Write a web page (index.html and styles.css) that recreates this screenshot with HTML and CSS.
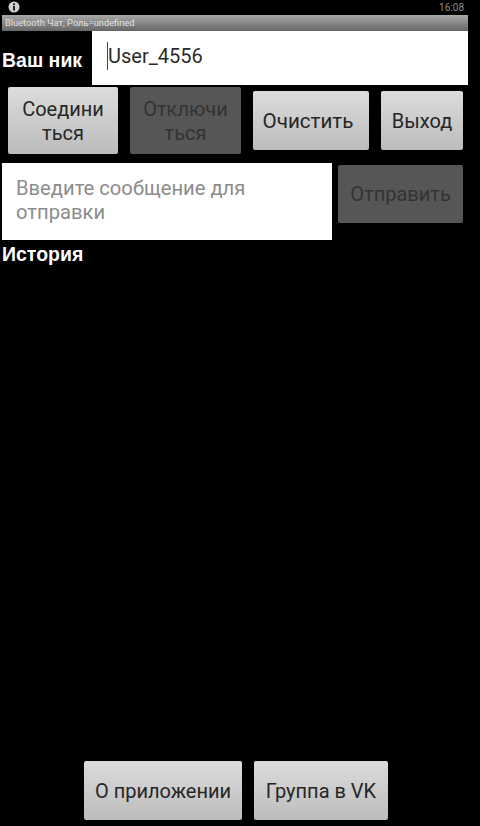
FILE: index.html
```html
<!DOCTYPE html>
<html lang="en">
<head>
  <meta charset="UTF-8">
  <meta name="viewport" content="width=device-width, initial-scale=1.0">
  <title>Bluetooth Чат</title>
  <link rel="stylesheet" href="styles.css">
</head>
<body>

  <!-- Status bar -->
  <div class="status-bar">
    <svg class="info-icon" width="12" height="12" viewBox="0 0 12 12">
      <circle cx="6" cy="6" r="5.5" fill="#d0d0d0"/>
      <rect x="5" y="5" width="2" height="4.5" fill="#222"/>
      <rect x="5" y="2.4" width="2" height="1.7" fill="#222"/>
    </svg>
    <span class="clock">16:08</span>
  </div>

  <div class="title-bar">Bluetooth Чат, Роль=undefined</div>

  <!-- Nick -->
  <div class="nick-row">
    <span class="label nick-label">Ваш ник</span>
    <div class="nick-input"><span class="cursor"></span>User_4556</div>
  </div>

  <!-- Main actions -->
  <div class="actions">
    <button class="btn btn-tall btn-connect">Соедини<br>ться</button>
    <button class="btn btn-tall btn-disconnect btn-disabled">Отключи<br>ться</button>
    <button class="btn btn-clear">Очистить</button>
    <button class="btn btn-exit">Выход</button>
  </div>

  <!-- Message -->
  <div class="message-row">
    <div class="message-input">Введите сообщение для отправки</div>
    <button class="btn btn-send btn-disabled">Отправить</button>
  </div>

  <div class="label history-label">История</div>

  <!-- Bottom links -->
  <div class="bottom-row">
    <button class="btn btn-about">О приложении</button>
    <button class="btn btn-group">Группа в VK</button>
  </div>

</body>
</html>
```

FILE: styles.css
```css
* {
  box-sizing: border-box;
}

body {
  margin: 0;
  width: 480px;
  height: 826px;
  overflow: hidden;
  display: flex;
  flex-direction: column;
  background-color: #000;
  font-family: Roboto, "Noto Sans", sans-serif;
}

.status-bar {
  height: 15px;
  display: flex;
  align-items: center;
  justify-content: space-between;
  padding: 0 16px 1px 8px;
}

.clock {
  color: #8f8f8f;
  font-size: 10px;
}

.title-bar {
  height: 16px;
  margin: 0 12px 0 2px;
  padding-left: 3px;
  background: linear-gradient(#a8a8a8, #666);
  color: #e2e2e2;
  font-size: 9.3px;
  line-height: 16px;
}

.nick-row {
  display: flex;
  height: 54px;
  margin-right: 12px;
}

.label {
  color: #fff;
  font-family: "Liberation Sans", Arial, sans-serif;
  font-size: 19.5px;
  font-weight: bold;
}

.nick-label {
  width: 92px;
  padding: 17px 0 0 2px;
  line-height: 24px;
}

.nick-input {
  flex: 1;
  display: flex;
  align-items: flex-start;
  padding: 13px 0 0 15px;
  background-color: #fff;
  color: #2b2b2b;
  font-size: 20px;
  line-height: 24px;
}

.cursor {
  width: 1px;
  height: 28px;
  margin-top: -2px;
  background-color: #444;
}

.btn {
  padding: 0;
  border: none;
  border-radius: 2px;
  background: linear-gradient(#dcdcdc, #bcbcbc);
  color: #262626;
  font-family: Roboto, "Noto Sans", sans-serif;
  font-size: 20px;
  line-height: 24px;
}

.btn-disabled {
  background: #565656;
  color: #333;
}

.actions {
  display: flex;
  align-items: center;
  gap: 12px;
  height: 67px;
  margin: 2px 0 0 8px;
}

.btn-tall {
  height: 67px;
}

.btn-connect {
  width: 110px;
}

.btn-disconnect {
  width: 111px;
}

.btn-clear {
  width: 116px;
  height: 59px;
  padding-right: 6px;
  font-size: 20.6px;
}

.btn-exit {
  width: 82px;
  height: 59px;
}

.message-row {
  display: flex;
  align-items: flex-start;
  gap: 6px;
  margin: 9px 0 0 2px;
}

.message-input {
  width: 330px;
  height: 77px;
  padding: 13px 14px 0;
  background-color: #fff;
  color: #8c8c8c;
  font-size: 20.2px;
  line-height: 24px;
}

.btn-send {
  width: 125px;
  height: 58px;
  margin-top: 2px;
}

.history-label {
  padding: 2px 0 0 2px;
  line-height: 24px;
}

.bottom-row {
  display: flex;
  gap: 12px;
  margin: auto 0 6px 84px;
}

.btn-about {
  width: 158px;
  height: 59px;
}

.btn-group {
  width: 134px;
  height: 59px;
}
```
